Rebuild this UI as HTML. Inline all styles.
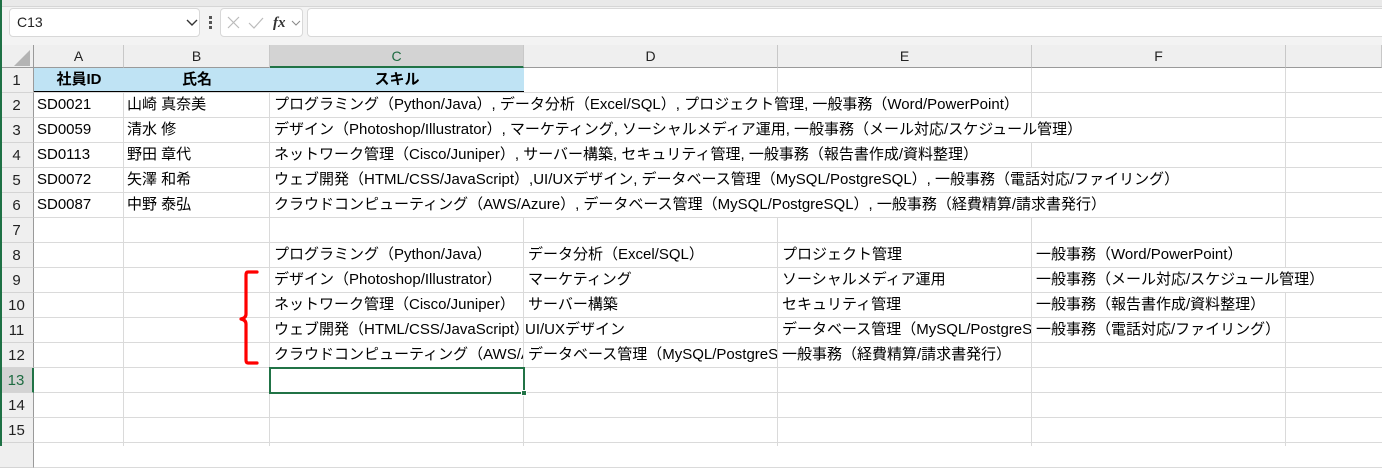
<!DOCTYPE html>
<html><head><meta charset="utf-8"><style>
*{margin:0;padding:0;box-sizing:border-box}
body{width:1382px;height:446px;overflow:hidden;background:#fff;position:relative;font-family:"Liberation Sans","Noto Sans CJK JP",sans-serif;font-size:14px;color:#000}
.a{position:absolute}
.t{position:absolute;height:24px;line-height:24px;white-space:nowrap;overflow:hidden;font-size:15px;background:#fff;padding-left:4px}
.hd{position:absolute;top:45px;height:23px;line-height:23px;text-align:center;font-size:14px;color:#222;background:#efefef;border-right:1px solid #c8c8c8;border-bottom:1px solid #9a9a9a}
.rh{position:absolute;left:0;width:34px;height:25px;line-height:25px;text-align:center;font-size:15px;color:#222;background:#efefef;border-bottom:1px solid #d4d4d4;border-right:1px solid #9a9a9a}
</style></head><body>
<div class="a" style="left:0;top:0;width:1382px;height:45px;background:#f3f3f3"></div>
<div class="a" style="left:0;top:0;width:1382px;height:7px;background:#e9e9e9;border-bottom:1px solid #d6d6d6"></div>
<div class="a" style="left:9px;top:8px;width:191px;height:29px;background:#fff;border:1px solid #d8d8d8;border-radius:4px;line-height:27px;padding-left:7px;font-size:14px;color:#222">C13</div>
<svg class="a" style="left:186px;top:19px" width="12" height="8"><path d="M1 1 L6 6 L11 1" stroke="#333" stroke-width="1.4" fill="none"/></svg>
<div class="a" style="left:209px;top:16px;width:3px;height:3px;background:#555"></div>
<div class="a" style="left:209px;top:21px;width:3px;height:3px;background:#555"></div>
<div class="a" style="left:209px;top:26px;width:3px;height:3px;background:#555"></div>
<div class="a" style="left:220px;top:8px;width:83px;height:29px;background:#fff;border:1px solid #d8d8d8;border-radius:4px"></div>
<svg class="a" style="left:226px;top:15px" width="80" height="16"><path d="M2 2 L13 13 M13 2 L2 13" stroke="#bbb" stroke-width="1.2"/><path d="M23 8 L28 13 L37 3" stroke="#bbb" stroke-width="1.2" fill="none"/><text x="47" y="12" font-family="Liberation Serif" font-style="italic" font-weight="bold" font-size="15" fill="#333">fx</text><path d="M66 6 L70 10 L74 6" stroke="#888" stroke-width="1" fill="none"/></svg>
<div class="a" style="left:307px;top:8px;width:1080px;height:29px;background:#fff;border:1px solid #d8d8d8;border-radius:4px"></div>
<div id="g"></div>
<script>
var cols=[34,124,270,524,778,1032,1286,1382],names="ABCDEFG",h='';
h+='<div class="a" style="left:0;top:45px;width:34px;height:23px;background:#efefef;border-right:1px solid #9a9a9a;border-bottom:1px solid #9a9a9a"></div>';
h+='<svg class="a" style="left:14px;top:50px" width="16" height="16"><path d="M16 0 L16 16 L0 16Z" fill="#b4b4b4"/></svg>';
for(var i=0;i<7;i++){var sel=i==2;h+='<div class="hd" style="left:'+cols[i]+'px;width:'+(cols[i+1]-cols[i])+'px;'+(sel?'background:#d3d3d3;color:#1e6b41;border-bottom:2px solid #217346':'')+'">'+(i<6?names[i]:'')+'</div>';}
for(var r=1;r<=16;r++){var y=68+(r-1)*25;var sel=r==13;h+='<div class="rh" style="top:'+y+'px;'+(sel?'background:#d3d3d3;color:#1e6b41;border-right:2px solid #217346':'')+'">'+(r<16?r:'')+'</div>';
h+='<div class="a" style="left:34px;top:'+(y+24)+'px;width:1348px;height:1px;background:#dadada"></div>';}
for(var i=1;i<7;i++)h+='<div class="a" style="left:'+(cols[i]-1)+'px;top:68px;width:1px;height:378px;background:#dadada"></div>';
document.getElementById('g').innerHTML=h;
</script>
<div class="a" style="left:34px;top:68px;width:490px;height:24px;background:#bfe3f4;border-bottom:1px solid #000"></div>
<div class="a" style="left:34px;top:68px;width:90px;height:24px;line-height:24px;text-align:center;font-weight:bold;font-size:15px">社員ID</div>
<div class="a" style="left:124px;top:68px;width:146px;height:24px;line-height:24px;text-align:center;font-weight:bold;font-size:15px">氏名</div>
<div class="a" style="left:270px;top:68px;width:254px;height:24px;line-height:24px;text-align:center;font-weight:bold;font-size:15px">スキル</div>
<div id="d"></div>
<script>
var R=[["SD0021","山崎 真奈美","プログラミング（Python/Java）, データ分析（Excel/SQL）, プロジェクト管理, 一般事務（Word/PowerPoint）"],
["SD0059","清水 修","デザイン（Photoshop/Illustrator）, マーケティング, ソーシャルメディア運用, 一般事務（メール対応/スケジュール管理）"],
["SD0113","野田 章代","ネットワーク管理（Cisco/Juniper）, サーバー構築, セキュリティ管理, 一般事務（報告書作成/資料整理）"],
["SD0072","矢澤 和希","ウェブ開発（HTML/CSS/JavaScript）,UI/UXデザイン, データベース管理（MySQL/PostgreSQL）, 一般事務（電話対応/ファイリング）"],
["SD0087","中野 泰弘","クラウドコンピューティング（AWS/Azure）, データベース管理（MySQL/PostgreSQL）, 一般事務（経費精算/請求書発行）"]];
var h='';
function T(x,y,w,s,pad){h+='<div class="t" style="left:'+x+'px;top:'+y+'px;'+(w?'width:'+w+'px;':'')+(pad!=null?'padding-left:'+pad+'px;':'')+'">'+s+'</div>';}
R.forEach(function(r,i){var y=93+i*25;T(34,y,89,r[0],3);T(124,y,145,r[1],3);T(270,y,null,r[2]);});
var M=[["プログラミング（Python/Java）","データ分析（Excel/SQL）","プロジェクト管理","一般事務（Word/PowerPoint）"],
["デザイン（Photoshop/Illustrator）","マーケティング","ソーシャルメディア運用","一般事務（メール対応/スケジュール管理）"],
["ネットワーク管理（Cisco/Juniper）","サーバー構築","セキュリティ管理","一般事務（報告書作成/資料整理）"],
["ウェブ開発（HTML/CSS/JavaScript）","UI/UXデザイン","データベース管理（MySQL/PostgreSQL）","一般事務（電話対応/ファイリング）"],
["クラウドコンピューティング（AWS/Azure）","データベース管理（MySQL/PostgreSQL）","一般事務（経費精算/請求書発行）",""]];
var cx=[270,524,778,1032];
M.forEach(function(r,i){var y=243+i*25;r.forEach(function(s,j){if(!s)return;var last=(j==3)||(r[j+1]=="");T(cx[j],y,last?null:253,s,j==1&&i==3?1:4);});});
document.getElementById('d').innerHTML=h;
</script>
<div class="a" style="left:269px;top:367px;width:256px;height:27px;border:2px solid #217346"></div>
<div class="a" style="left:521px;top:390px;width:6px;height:6px;background:#217346;border:1px solid #fff"></div>
<svg class="a" style="left:236px;top:268px" width="26" height="100"><path d="M21 4 L12 4 Q10 4 10 7 L10 46 Q10 50 5 51 Q10 52 10 56 L10 92 Q10 95 12 95 L21 95" stroke="#ff0000" stroke-width="3.2" fill="none" stroke-linejoin="round" stroke-linecap="round"/></svg>
<div class="a" style="left:0;top:0;width:2px;height:446px;background:#1e7145;z-index:10"></div>
</body></html>
